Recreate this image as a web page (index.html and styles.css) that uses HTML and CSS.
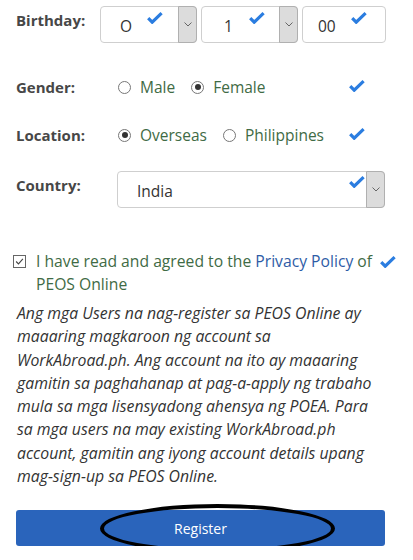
FILE: index.html
```html
<!DOCTYPE html>
<html>
<head>
<meta charset="utf-8">
<link rel="stylesheet" href="styles.css">
</head>
<body>
<svg width="0" height="0" class="defs">
  <defs>
    <symbol id="ok" viewBox="0 0 16 12">
      <path d="M1.2 6.2 L5.2 10.2 L14.6 1.2" fill="none" stroke="#2b7de0" stroke-width="3.2" stroke-linejoin="miter"/>
    </symbol>
    <symbol id="chev" viewBox="0 0 8 5">
      <path d="M0.5 0.5 L4 4 L7.5 0.5" fill="none" stroke="#666" stroke-width="1"/>
    </symbol>
  </defs>
</svg>
<div class="form">
  <div class="row row-birthday">
    <div class="label">Birthday:</div>
    <div class="fields">
      <div class="sel sel-month">
        <span class="val">O</span>
        <svg class="ok"><use href="#ok"/></svg>
        <span class="arrow"><svg class="chev"><use href="#chev"/></svg></span>
      </div>
      <div class="sel sel-day">
        <span class="val">1</span>
        <svg class="ok"><use href="#ok"/></svg>
        <span class="arrow"><svg class="chev"><use href="#chev"/></svg></span>
      </div>
      <div class="sel sel-year">
        <span class="val">00</span>
        <svg class="ok"><use href="#ok"/></svg>
      </div>
    </div>
  </div>

  <div class="row row-radio row-gender">
    <div class="label">Gender:</div>
    <div class="radios">
      <span class="radio"></span><span class="opt">Male</span>
      <span class="radio on"></span><span class="opt">Female</span>
    </div>
    <svg class="ok ok-row"><use href="#ok"/></svg>
  </div>

  <div class="row row-radio row-location">
    <div class="label">Location:</div>
    <div class="radios">
      <span class="radio on"></span><span class="opt">Overseas</span>
      <span class="radio"></span><span class="opt">Philippines</span>
    </div>
    <svg class="ok ok-row"><use href="#ok"/></svg>
  </div>

  <div class="row row-country">
    <div class="label">Country:</div>
    <div class="sel sel-country">
      <span class="val">India</span>
      <svg class="ok"><use href="#ok"/></svg>
      <span class="arrow"><svg class="chev"><use href="#chev"/></svg></span>
    </div>
  </div>

  <div class="agree">
    <span class="checkbox"><svg viewBox="0 0 13 13"><path d="M2.5 6.5 L5.3 9.3 L10.5 3.5" fill="none" stroke="#444" stroke-width="1.3"/></svg></span>
    <p class="agree-text">I have read and agreed to the <span class="link">Privacy Policy</span> of<br>PEOS Online</p>
    <svg class="ok ok-agree"><use href="#ok"/></svg>
  </div>

  <p class="note">Ang mga Users na nag-register sa PEOS Online ay<br>maaaring magkaroon ng account sa<br>WorkAbroad.ph. Ang account na ito ay maaaring<br>gamitin sa paghahanap at pag-a-apply ng trabaho<br>mula sa mga lisensyadong ahensya ng POEA. Para<br>sa mga users na may existing WorkAbroad.ph<br>account, gamitin ang iyong account details upang<br>mag-sign-up sa PEOS Online.</p>

  <div class="btn-wrap">
    <button class="btn">Register</button>
    <span class="circle"></span>
  </div>
</div>
</body>
</html>
```
FILE: styles.css
```css
* { box-sizing: border-box; }
html, body { margin: 0; padding: 0; background: #fff; }
body { font-family: "Open Sans", "Noto Sans", sans-serif; font-size: 15px; color: #333; }
.defs { position: absolute; }

.form { padding: 6px 0 0 16px; width: 400px; }

.row { display: flex; align-items: center; }
.label { width: 84px; font-weight: bold; color: #474747; font-size: 15px; flex: none; }

.row-birthday { align-items: flex-start; }
.row-birthday .label { padding-top: 4px; }
.fields { display: flex; gap: 4px; }

.sel {
  position: relative;
  height: 37px;
  border: 1px solid #cfcfcf;
  border-radius: 4px;
  background: #fff;
  display: flex;
  align-items: center;
  color: #333;
  font-size: 15.5px;
}
.sel .val { padding-left: 19px; padding-top: 3px; }
.sel .ok { position: absolute; width: 16px; height: 12px; }
.arrow {
  position: absolute;
  right: -1px; top: -1px; bottom: -1px;
  width: 19px;
  background: #dcdcdc;
  border: 1px solid #b0b0b0;
  border-radius: 0 4px 4px 0;
  display: flex; align-items: center; justify-content: center;
}
.chev { width: 8px; height: 5px; }

.sel-month { width: 97px; }
.sel-month .ok { left: 46px; top: 5px; }
.sel-day { width: 97px; }
.sel-day .val { padding-left: 22px; }
.sel-day .ok { left: 47px; top: 5px; }
.sel-year { width: 84px; }
.sel-year .val { padding-left: 15px; }
.sel-year .ok { left: 48px; top: 5px; }

.row-radio { height: 24px; position: relative; }
.row-gender { margin-top: 32px; }
.row-location { margin-top: 24px; }
.radios { display: flex; align-items: center; padding-left: 18px; }
.radio {
  width: 13px; height: 13px; border-radius: 50%;
  border: 1px solid #777; background: #fff; display: inline-block; flex: none;
  position: relative;
}
.radio.on::after {
  content: ""; position: absolute; left: 2.5px; top: 2.5px;
  width: 6px; height: 6px; border-radius: 50%; background: #333;
}
.opt { color: #3f6b45; margin-left: 9px; margin-right: 16px; font-size: 15.5px; }
.ok-row { position: absolute; left: 333px; top: 5px; width: 16px; height: 12px; }

.row-country { margin-top: 24px; align-items: flex-start; }
.row-country .label { padding-top: 4px; width: 101px; }
.sel-country { width: 268px; }
.sel-country .val { padding-left: 19px; }
.sel-country .ok { left: 231px; top: 4px; }

.agree { position: relative; display: flex; align-items: flex-start; margin-top: 42px; }
.checkbox {
  width: 13px; height: 13px; border: 1px solid #666; flex: none;
  margin-left: -3px; margin-top: 5px; background: #fff;
}
.checkbox svg { display: block; width: 11px; height: 11px; }
.agree-text { margin: 0 0 0 10px; color: #3f6b45; line-height: 23px; font-size: 15.7px; white-space: nowrap; }
.link { color: #2e5ca6; }
.ok-agree { position: absolute; left: 364px; top: 6px; width: 16px; height: 12px; }

.note { margin: 6px 0 0 1px; font-style: italic; color: #333; line-height: 23.3px; font-size: 15.8px; white-space: nowrap; }

.btn-wrap { position: relative; margin-top: 22px; }
.btn {
  display: block; width: 369px; height: 36px; border: none; border-radius: 3px;
  background: #2a64bb; color: #fff; font-family: "Open Sans", sans-serif; font-size: 14px;
}
.circle {
  position: absolute; left: 84px; top: -6px; width: 235px; height: 49px;
  border: 4px solid #000; border-radius: 50%;
}
```
